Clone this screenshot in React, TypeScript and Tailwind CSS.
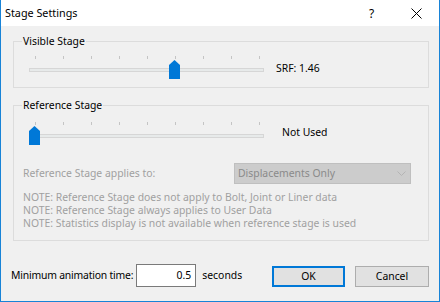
import React from "react";

const font = { fontFamily: '"Noto Sans", "Open Sans", sans-serif' };

function Thumb() {
  return (
    <svg width="11" height="19" viewBox="0 0 11 19">
      <path d="M0 5 L5.5 0 L11 5 L11 19 L0 19 Z" fill="#0078d7" />
    </svg>
  );
}

function Slider({ value }: { value: number }) {
  const ticks = [0, 1, 2, 3, 4, 5, 6, 7, 8];
  return (
    <div className="relative w-[235px] h-[23px] shrink-0">
      {ticks.map((t) => (
        <div
          key={t}
          className="absolute top-0 w-px h-[3px] bg-[#c4c4c4]"
          style={{ left: 6 + t * 28 }}
        />
      ))}
      <div className="absolute left-0 right-0 top-[12px] h-[4px] bg-[#e7eaea] border border-[#d6d6d6]" />
      <div className="absolute top-[4px]" style={{ left: value * 28 }}>
        <Thumb />
      </div>
    </div>
  );
}

export default function App() {
  return (
    <div
      className="w-[440px] h-[302px] flex flex-col bg-[#f0f0f0] border-l border-r border-b border-[#1883d7] text-[10.4px] text-black overflow-hidden"
      style={font}
    >
      <div className="h-[26px] bg-white flex items-center shrink-0">
        <span className="pl-[4px] flex-1 text-[10.8px]">Stage Settings</span>
        <span className="w-[10px] text-[12px] mr-[32px] mt-[1px]">?</span>
        <svg width="11" height="11" viewBox="0 0 11 11" className="mr-[17px]">
          <path d="M0.5 0.5 L10.5 10.5 M10.5 0.5 L0.5 10.5" stroke="#000" strokeWidth="1" />
        </svg>
      </div>

      <div className="flex flex-col pl-[12px] pr-[10px]">
        <fieldset className="mt-[7px] border border-[#dcdcdc] pl-[15px] pb-[8px] rounded-none">
          <legend className="ml-[-7px] px-[1px] leading-[16px]">Visible Stage</legend>
          <div className="flex items-center mt-[7px]">
            <Slider value={5} />
            <span className="ml-[12px] mt-[2px]">SRF: 1.46</span>
          </div>
        </fieldset>

        <fieldset className="mt-[9px] border border-[#dcdcdc] pl-[9px] pb-[10px]">
          <legend className="ml-[-1px] px-[1px] leading-[16px]">Reference Stage</legend>
          <div className="flex items-center mt-[9px] ml-[6px]">
            <Slider value={0} />
            <span className="ml-[18px] mt-[-2px]">Not Used</span>
          </div>
          <div className="flex items-center mt-[18px]">
            <span className="w-[211px] text-[#a0a0a0]">Reference Stage applies to:</span>
            <div className="w-[177px] h-[21px] bg-[#cccccc] border border-[#bfbfbf] flex items-center pl-[3px] pr-[4px] text-[#8a8a8a]">
              <span className="flex-1">Displacements Only</span>
              <svg width="9" height="5" viewBox="0 0 9 5">
                <path d="M0.5 0.5 L4.5 4.5 L8.5 0.5" stroke="#b4b4b4" fill="none" />
              </svg>
            </div>
          </div>
          <div className="mt-[7px] flex flex-col leading-[13px] text-[#a0a0a0]">
            <span>NOTE: Reference Stage does not apply to Bolt, Joint or Liner data</span>
            <span>NOTE: Reference Stage always applies to User Data</span>
            <span>NOTE: Statistics display is not available when reference stage is used</span>
          </div>
        </fieldset>

        <div className="flex items-center mt-[23px] ml-[-2px]">
          <span className="shrink-0 whitespace-nowrap tracking-[-0.2px] mr-[3px]">Minimum animation time:</span>
          <div className="w-[60px] h-[23px] shrink-0 bg-white border border-[#7a7a7a] flex items-center justify-end pr-[4px]">
            0.5
          </div>
          <span className="ml-[6px] flex-1">seconds</span>
          <button className="w-[73px] h-[21px] mt-[2px] shrink-0 bg-[#e1e1e1] border-2 border-[#0078d7] flex items-center justify-center">
            OK
          </button>
          <button className="ml-[10px] w-[74px] h-[21px] mt-[2px] shrink-0 bg-[#e1e1e1] border border-[#adadad] flex items-center justify-center">
            Cancel
          </button>
        </div>
      </div>
    </div>
  );
}
